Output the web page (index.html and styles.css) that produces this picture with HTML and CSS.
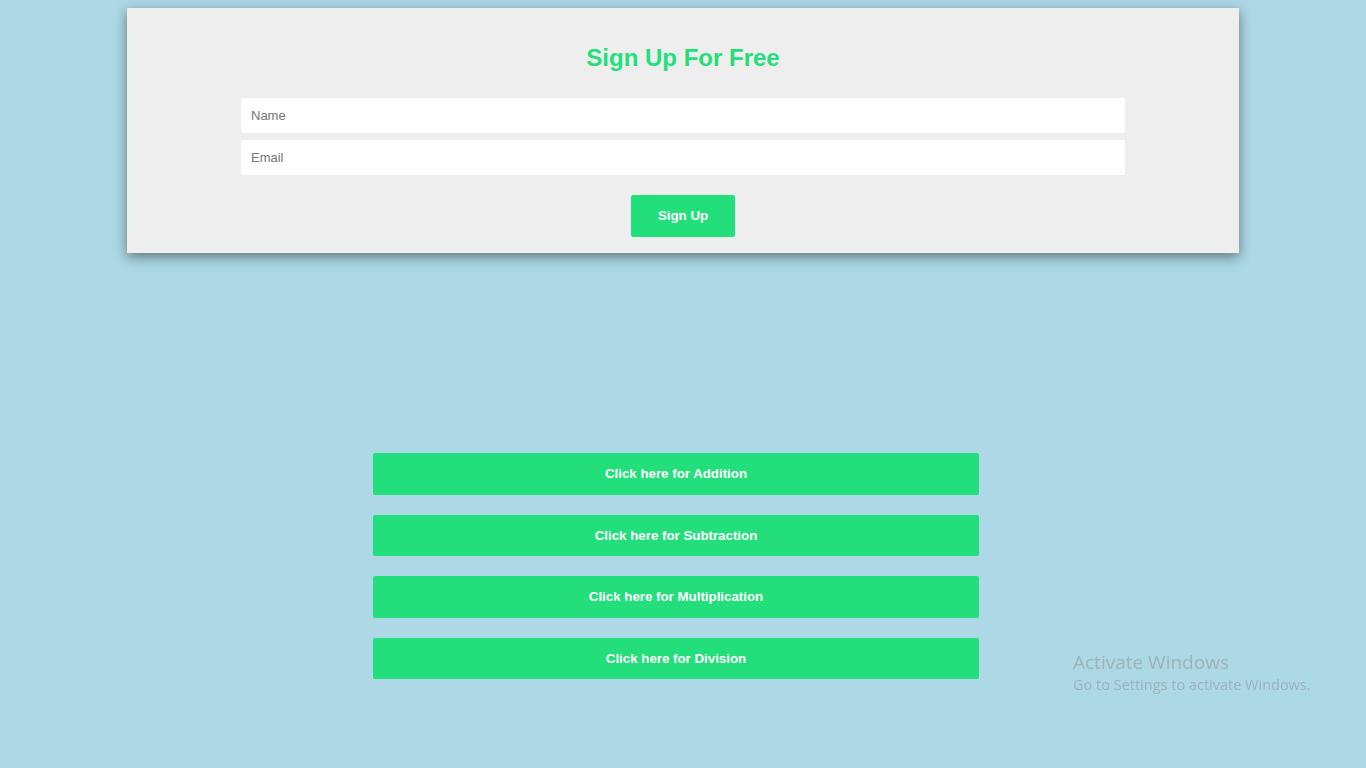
FILE: index.html
```html
<!DOCTYPE html>
<html>
<head>
<meta charset="utf-8">
<link rel="stylesheet" href="styles.css">
</head>
<body>
<div class="card">
  <h2 class="title">Sign Up For Free</h2>
  <form class="form">
    <input class="field" type="text" placeholder="Name">
    <input class="field" type="email" placeholder="Email">
    <button class="signup" type="button">Sign Up</button>
  </form>
</div>
<div class="ops">
  <button class="op" type="button">Click here for Addition</button>
  <button class="op" type="button">Click here for Subtraction</button>
  <button class="op" type="button">Click here for Multiplication</button>
  <button class="op" type="button">Click here for Division</button>
</div>
<div class="watermark">
  <div class="wm-title">Activate Windows</div>
  <div class="wm-sub">Go to Settings to activate Windows.</div>
</div>
</body>
</html>
```
FILE: styles.css
```css
html, body {
  margin: 0;
  padding: 0;
}
body {
  background: #add8e6;
  font-family: "Liberation Sans", Arial, sans-serif;
  padding-top: 8px;
  min-height: 760px;
}
.card {
  width: 1112px;
  margin: 0 auto;
  background: #eeeeee;
  box-shadow: 0 4px 12px rgba(0, 0, 0, 0.45);
  padding: 30px 0 16px;
  box-sizing: border-box;
}
.title {
  margin: 0;
  text-align: center;
  color: #23df7b;
  font-size: 24px;
  line-height: 40px;
  font-weight: bold;
}
.form {
  margin: 20px auto 0;
  width: 884px;
  display: flex;
  flex-direction: column;
  align-items: center;
  gap: 7px;
}
.field {
  width: 100%;
  height: 35px;
  box-sizing: border-box;
  border: none;
  border-radius: 2px;
  background: #ffffff;
  padding: 0 10px;
  font-family: "Liberation Sans", Arial, sans-serif;
  font-size: 13px;
  color: #333;
  outline: none;
}
.field::placeholder {
  color: #757575;
}
.signup {
  margin-top: 13px;
  width: 104px;
  height: 42px;
  border: none;
  border-radius: 2px;
  background: #23df7b;
  color: #ffffff;
  font-family: "Liberation Sans", Arial, sans-serif;
  font-weight: bold;
  font-size: 13.3px;
  padding-bottom: 2px;
}
.ops {
  width: 606px;
  margin: 200px 0 0 373px;
  display: flex;
  flex-direction: column;
  gap: 20px;
}
.op {
  height: 41.6px;
  border: none;
  border-radius: 2px;
  background: #23df7b;
  color: #ffffff;
  font-family: "Liberation Sans", Arial, sans-serif;
  font-weight: bold;
  font-size: 13.3px;
}
.watermark {
  position: fixed;
  left: 1073px;
  top: 650px;
  color: #9eb2ba;
  font-family: "Open Sans", "Noto Sans", sans-serif;
}
.wm-title {
  font-size: 19px;
  line-height: 25px;
}
.wm-sub {
  font-size: 14.5px;
  line-height: 20px;
}
```
